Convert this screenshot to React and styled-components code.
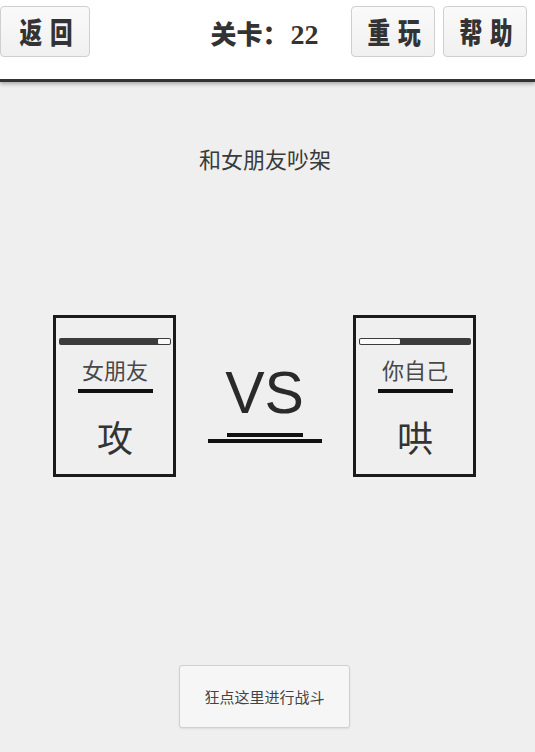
import React from "react";
import styled, { createGlobalStyle } from "styled-components";

const Global = createGlobalStyle`
  html, body { margin: 0; padding: 0; background: #efefef; }
  body { font-family: "Noto Sans CJK SC", "Noto Sans", sans-serif; color: #333; }
  * { box-sizing: border-box; }
`;

const Page = styled.div`
  width: 535px;
  height: 752px;
  overflow: hidden;
  display: flex;
  flex-direction: column;
`;

const Header = styled.header`
  position: relative;
  z-index: 1;
  height: 82px;
  flex: none;
  display: grid;
  grid-template-columns: 1fr auto 1fr;
  align-items: start;
  padding-top: 6px;
  background: #fff;
  border-bottom: 3px solid #333;
  box-shadow: 0 2px 4px rgba(0, 0, 0, 0.3);
`;

const HeadButton = styled.button`
  width: ${(p) => p.$w}px;
  height: 51px;
  padding: 0;
  margin: 0;
  border: 1px solid #cfcfcf;
  border-radius: 4px;
  background: linear-gradient(#fafafa, #f0f0f0);
  color: #333;
  font-family: "Noto Sans CJK SC", sans-serif;
  font-weight: 900;
  display: flex;
  align-items: center;
  justify-content: center;
  cursor: pointer;
`;

const ButtonLabel = styled.span`
  display: inline-block;
  font-size: 29px;
  line-height: 1;
  letter-spacing: 10px;
  margin-right: -10px;
  transform: scaleX(0.78);
`;

const LeftSlot = styled.div`
  justify-self: start;
`;

const RightSlot = styled.div`
  justify-self: end;
  display: flex;
  gap: 8px;
  padding-right: 8px;
`;

const Level = styled.div`
  height: 51px;
  line-height: 51px;
  font-size: 26px;
  font-weight: 900;
  color: #333;
  margin-top: 1px;
  margin-right: 6px;
  white-space: nowrap;
`;

const Digits = styled.span`
  font-family: "Liberation Serif", "DejaVu Serif", serif;
  font-weight: 700;
  font-size: 28px;
  margin-left: 2px;
`;

const Main = styled.main`
  flex: 1;
  display: flex;
  flex-direction: column;
  align-items: center;
  background: #efefef;
`;

const Title = styled.div`
  margin-top: 62px;
  font-size: 22px;
  line-height: 28px;
  color: #3a3a3a;
  margin-right: 5px;
`;

const Arena = styled.div`
  margin-top: 143px;
  display: flex;
  align-items: flex-start;
  padding-right: 6px;
`;

const Card = styled.div`
  width: 123px;
  height: 162px;
  border: 3px solid #1a1a1a;
  display: flex;
  flex-direction: column;
  align-items: center;
  padding: 20px 2px 0 3px;
  background: #efefef;
`;

const Bar = styled.div`
  width: 100%;
  height: 7px;
  border-radius: 2px;
  background: #3b3b3b;
  padding: 1px;
  display: flex;
  justify-content: ${(p) => (p.$side === "left" ? "flex-end" : "flex-start")};
`;

const BarGap = styled.div`
  height: 100%;
  background: #fafafa;
  border-radius: 1px;
`;

const Name = styled.div`
  margin-top: 10px;
  font-size: 22px;
  line-height: 28px;
  color: #484848;
`;

const Rule = styled.div`
  margin-top: 6px;
  width: 75px;
  height: 4px;
  background: #111;
`;

const Action = styled.div`
  margin-top: 21px;
  font-size: 36px;
  line-height: 44px;
  color: #333;
`;

const VsColumn = styled.div`
  width: 177px;
  padding-top: 49px;
  display: flex;
  flex-direction: column;
  align-items: center;
`;

const VsText = styled.div`
  font-family: "Liberation Sans", Arial, sans-serif;
  font-size: 59px;
  line-height: 58px;
  color: #2a2a2a;
`;

const VsLine = styled.div`
  width: ${(p) => p.$w}px;
  height: 4px;
  background: #111;
  margin-top: ${(p) => p.$mt}px;
`;

const FightButton = styled.button`
  margin-top: auto;
  margin-bottom: 24px;
  margin-right: 6px;
  width: 171px;
  height: 63px;
  border: 1px solid #d0d0d0;
  border-radius: 3px;
  background: #f6f6f6;
  box-shadow: 0 1px 2px rgba(0, 0, 0, 0.08);
  font-family: "Noto Sans CJK SC", sans-serif;
  font-size: 15px;
  color: #444;
  cursor: pointer;
`;

const fighters = {
  left: { name: "女朋友", action: "攻", gap: 11 },
  right: { name: "你自己", action: "哄", gap: 36 },
};

function Fighter({ side }) {
  const f = fighters[side];
  return (
    <Card>
      <Bar $side={side}>
        <BarGap style={{ width: `${f.gap}%` }} />
      </Bar>
      <Name>{f.name}</Name>
      <Rule />
      <Action>{f.action}</Action>
    </Card>
  );
}

export default function App() {
  return (
    <Page>
      <Global />
      <Header>
        <LeftSlot>
          <HeadButton $w={90}>
            <ButtonLabel>返回</ButtonLabel>
          </HeadButton>
        </LeftSlot>
        <Level>
          关卡：<Digits>22</Digits>
        </Level>
        <RightSlot>
          <HeadButton $w={84}>
            <ButtonLabel>重玩</ButtonLabel>
          </HeadButton>
          <HeadButton $w={84}>
            <ButtonLabel>帮助</ButtonLabel>
          </HeadButton>
        </RightSlot>
      </Header>
      <Main>
        <Title>和女朋友吵架</Title>
        <Arena>
          <Fighter side="left" />
          <VsColumn>
            <VsText>VS</VsText>
            <VsLine $w={76} $mt={11} />
            <VsLine $w={114} $mt={2} />
          </VsColumn>
          <Fighter side="right" />
        </Arena>
        <FightButton>狂点这里进行战斗</FightButton>
      </Main>
    </Page>
  );
}
